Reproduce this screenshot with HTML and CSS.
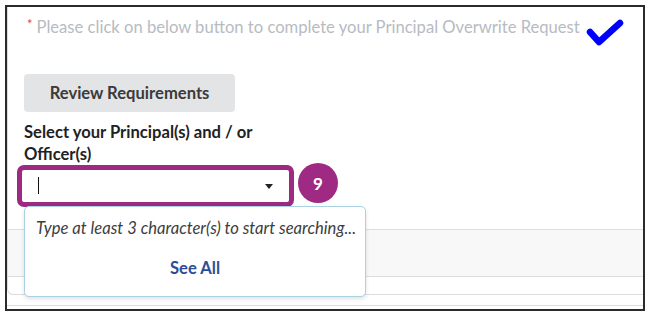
FILE: index.html
```html
<!DOCTYPE html>
<html>
<head>
<meta charset="utf-8">
<link rel="stylesheet" href="styles.css">
</head>
<body>
<div class="frame">
  <div class="card">
    <div class="notice">
      <span class="req">*</span>
      <span class="notice-text">Please click on below button to complete your Principal Overwrite Request</span>
      <svg class="check" width="38" height="28" viewBox="0 0 38 28"><path d="M4 13 L13 23 L34 4" fill="none" stroke="#0000ff" stroke-width="6.5" stroke-linecap="round" stroke-linejoin="round"/></svg>
    </div>
    <button class="review">Review Requirements</button>
    <div class="label">Select your Principal(s) and / or Officer(s)</div>
    <div class="select-row">
      <div class="select">
        <span class="cursor"></span>
        <span class="caret"></span>
        <div class="popup">
          <div class="hint">Type at least 3 character(s) to start searching...</div>
          <div class="see-all">See All</div>
        </div>
      </div>
      <div class="badge">9</div>
    </div>
    <div class="band"></div>
  </div>
  <div class="footer-line"></div>
</div>
</body>
</html>
```

FILE: styles.css
```css
html, body {
  margin: 0;
  padding: 0;
  background: #ffffff;
}
body {
  font-family: Lato, "Open Sans", sans-serif;
}
.frame {
  margin: 5px 0 0 5px;
  width: 636px;
  height: 302px;
  border: 2px solid #2b2b2b;
  overflow: hidden;
  position: relative;
}
.card {
  border: 1px solid #dcdcdc;
  border-top: none;
  border-radius: 0 0 6px 6px;
  margin-right: -12px;
  padding: 10px 0 17px 16px;
}
.notice {
  display: flex;
  align-items: center;
  height: 20px;
  margin-left: 3px;
  font-size: 16.6px;
  color: #b7bbc2;
  white-space: nowrap;
}
.req {
  color: #e0473a;
  font-size: 13px;
  align-self: flex-start;
  margin-top: -1px;
  margin-right: 4px;
}
.check {
  margin-left: 6px;
  margin-top: 12px;
}
.review {
  display: block;
  margin-top: 37px;
  width: 211px;
  height: 38px;
  border: none;
  border-radius: 4px;
  background: #e3e4e5;
  color: #3a3a3a;
  font-family: Lato, sans-serif;
  font-weight: 700;
  font-size: 16.6px;
  padding: 0;
}
.label {
  margin-top: 9px;
  width: 260px;
  font-size: 16.6px;
  font-weight: 700;
  line-height: 22px;
  color: #222222;
}
.select-row {
  display: flex;
  align-items: flex-start;
  margin-left: -7px;
}
.select {
  position: relative;
  width: 267px;
  height: 32px;
  border: 5px solid #9c2a80;
  border-radius: 7px;
  background: #ffffff;
}
.cursor {
  position: absolute;
  left: 16px;
  top: 7px;
  width: 1px;
  height: 17px;
  background: #111;
}
.caret {
  position: absolute;
  left: 243px;
  top: 14px;
  width: 0;
  height: 0;
  border-left: 4px solid transparent;
  border-right: 4px solid transparent;
  border-top: 5px solid #222;
}
.badge {
  margin-left: 4px;
  margin-top: -2px;
  width: 40px;
  height: 40px;
  border-radius: 50%;
  background: #9e2a83;
  color: #ffffff;
  font-weight: 700;
  font-size: 17px;
  display: flex;
  align-items: center;
  justify-content: center;
}
.popup {
  position: absolute;
  left: 2px;
  top: 36px;
  width: 340px;
  height: 89px;
  border: 1px solid #a9d3e2;
  border-radius: 5px;
  background: #ffffff;
  box-shadow: 0 2px 4px rgba(0,0,0,0.12);
  z-index: 2;
}
.hint {
  margin-top: 10px;
  padding-left: 11px;
  font-style: italic;
  font-size: 16.6px;
  color: #3d3d3d;
  line-height: 22px;
  white-space: nowrap;
}
.see-all {
  margin-top: 19px;
  text-align: center;
  font-weight: 700;
  font-size: 16.6px;
  color: #2f4d97;
  line-height: 20px;
}
.band {
  margin-top: 22px;
  margin-left: -16px;
  height: 46px;
  background: #f8f8f8;
  border-top: 1px solid #dedede;
  border-bottom: 1px solid #dedede;
}
.footer-line {
  margin-top: 10px;
  height: 0;
  border-top: 1px solid #dcdcdc;
}
```
